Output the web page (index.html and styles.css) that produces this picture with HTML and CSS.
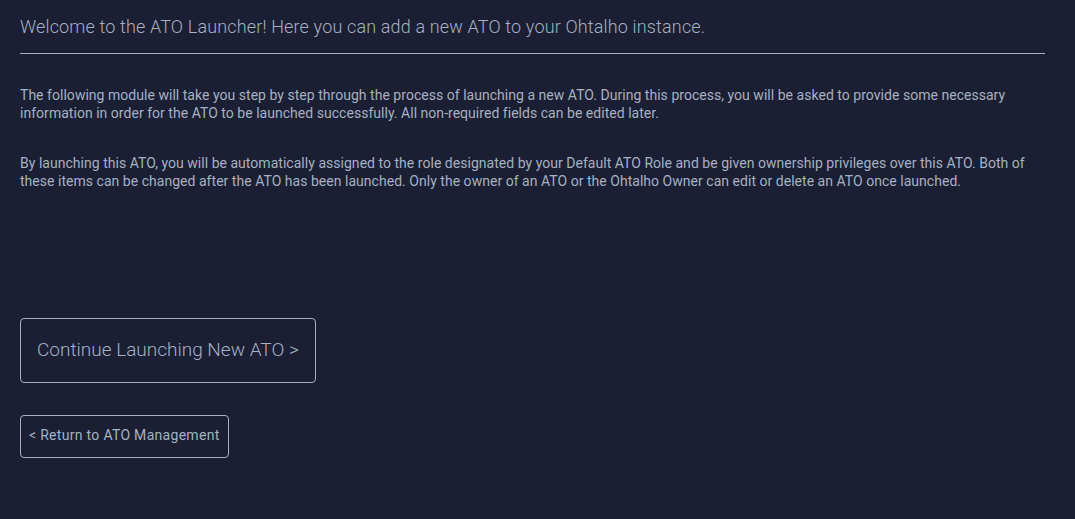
FILE: index.html
```html
<!DOCTYPE html>
<html>
<head>
<meta charset="utf-8">
<link rel="stylesheet" href="styles.css">
</head>
<body>
<div class="page">
  <h1 class="title">Welcome to the ATO Launcher! Here you can add a new ATO to your Ohtalho instance.</h1>
  <hr class="rule">
  <p class="text">The following module will take you step by step through the process of launching a new ATO. During this process, you will be asked to provide some necessary information in order for the ATO to be launched successfully. All non-required fields can be edited later.</p>
  <p class="text">By launching this ATO, you will be automatically assigned to the role designated by your Default ATO Role and be given ownership privileges over this ATO. Both of these items can be changed after the ATO has been launched. Only the owner of an ATO or the Ohtalho Owner can edit or delete an ATO once launched.</p>
  <div class="actions">
    <button class="btn btn-large">Continue Launching New ATO &gt;</button>
    <button class="btn btn-small">&lt; Return to ATO Management</button>
  </div>
</div>
</body>
</html>
```

FILE: styles.css
```css
html, body {
  margin: 0;
  padding: 0;
  background: #1a1f33;
  height: 100%;
}
body {
  font-family: Roboto, "Liberation Sans", sans-serif;
  color: #a6b1c2;
}
.page {
  padding: 14px 30px 0 20px;
}
.title {
  font-size: 18px;
  font-weight: 300;
  letter-spacing: 0.15px;
  line-height: 26px;
  margin: 0 0 13px 0;
}
.rule {
  border: 0;
  border-top: 1px solid #a9b0bd;
  margin: 0;
}
.text {
  font-size: 14px;
  letter-spacing: 0.03px;
  line-height: 18px;
  margin: 32px 0 0 0;
}
.text + .text {
  margin-top: 32px;
}
.actions {
  display: flex;
  flex-direction: column;
  align-items: flex-start;
  gap: 32px;
  margin-top: 128px;
}
.btn {
  background: transparent;
  color: #a6b1c2;
  font-family: Roboto, "Liberation Sans", sans-serif;
  border: 1px solid #a9b0bd;
  border-radius: 4px;
  cursor: pointer;
}
.btn-large {
  font-size: 19px;
  font-weight: 300;
  height: 65px;
  padding: 0 16px 2px 16px;
}
.btn-small {
  font-size: 14px;
  letter-spacing: 0.3px;
  height: 43px;
  padding: 0 8px 3px 8px;
}
```
